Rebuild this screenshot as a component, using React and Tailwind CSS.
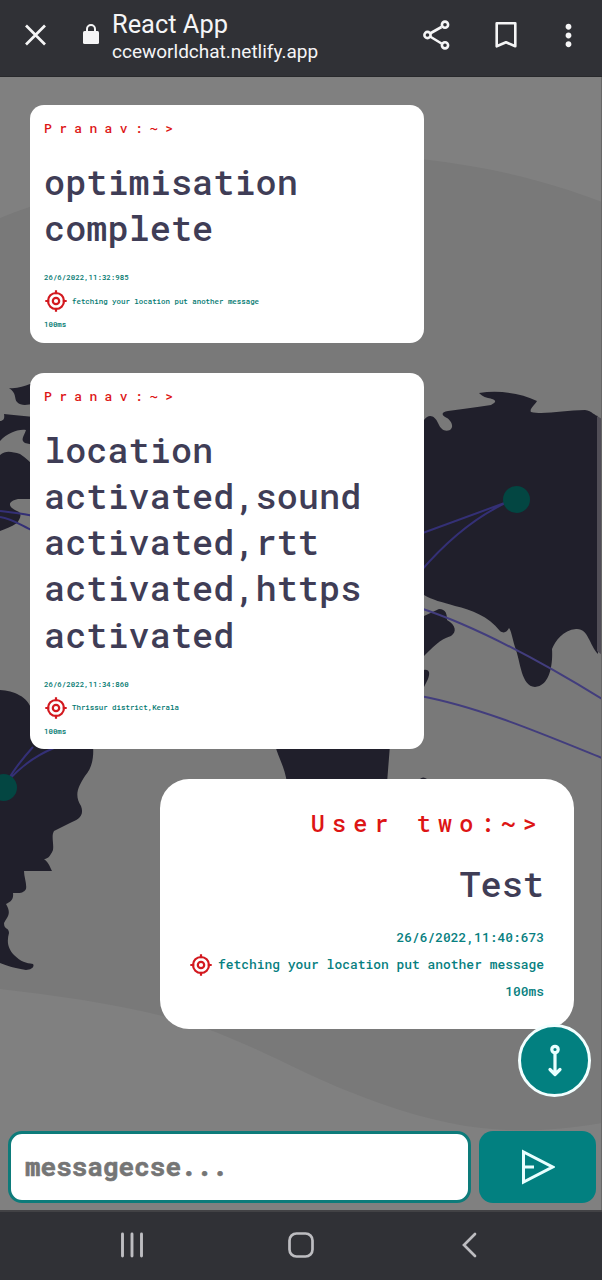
import { MdMoreVert } from 'react-icons/md';

function Target() {
  return (
    <svg viewBox="0 0 22 22" className="size-[22px] shrink-0" fill="none" stroke="#d3191f" strokeWidth="2.2">
      <circle cx="11" cy="11" r="8" />
      <circle cx="11" cy="11" r="3.2" />
      <path d="M11 .3v4M11 17.700v4M.3 11h4M17.700 11h4" />
    </svg>
  );
}

function Received({ name, lines, date, place }) {
  return (
    <article className="w-[394px] rounded-[14px] bg-white px-[14px] pt-[14px] pb-[12.4px]">
      <h2 className="text-[13px] leading-[19px] font-medium tracking-[7.35px] text-[#dd1515]">{name}</h2>
      <div className="pt-[21px] text-[35.25px] leading-[46.2px] font-medium text-[#3f3d56]">
        {lines.map((line) => (
          <p key={line} className="whitespace-nowrap">{line}</p>
        ))}
      </div>
      <div className="pt-[20.8px] text-[7.43px] leading-[11px] font-medium text-teal-700">
        <p>{date}</p>
        <div className="mt-[7px] mb-[7px] ml-px flex h-[22px] items-center gap-[5px]">
          <Target />
          <p>{place}</p>
        </div>
        <p>100ms</p>
      </div>
    </article>
  );
}

function Sent({ name, text, date, place }) {
  return (
    <article className="h-[250px] w-[414px] self-end rounded-[29px] bg-white px-[30px] pt-[28px] text-right">
      <h2 className="text-[23.5px] leading-[32px] font-medium tracking-[7.1px] text-[#dd1515]">{name}</h2>
      <p className="pt-[22px] text-[35.25px] leading-[46.2px] font-medium text-[#3f3d56]">{text}</p>
      <div className="pt-[16.4px] text-[12.95px] leading-[27.3px] font-medium text-[#078080]">
        <p>{date}</p>
        <div className="flex items-center justify-end gap-[6px]">
          <Target />
          <p className="whitespace-nowrap">{place}</p>
        </div>
        <p>100ms</p>
      </div>
    </article>
  );
}

function WorldMap() {
  return (
    <svg viewBox="0 77 602 1133" className="absolute inset-0 size-full" fill="none">
      <path fill="#797979" d="M0 218C100 178 230 154 330 154C430 155 520 170 602 202V1123C520 1137 460 1131 385 1105C300 1076 270 1050 190 1023C120 1004 60 996 0 989Z" />
      <g fill="#201f2b">
        <path d="M30 384C24 386 17 389 9 388C17 393 14 399 17 402C21 406 26 405 34 404V384Z" />
        <path d="M34 417C24 416 13 415 4 414C5 419 3 421 0 421V441C8 433 17 429 26 430C24 436 20 440 25 443L34 445V417Z" />
        <path d="M0 455C6 450 12 452 20 454C26 458 30 462 34 466V499L18 499C9 501 6 506 17 511C23 513 20 519 17 523C11 527 5 529 0 531Z" />
        <path d="M0 690C14 691 27 696 32 710L50 745H93C94 758 92 768 85 776C78 787 74 795 81 806C85 817 77 820 70 823L54 831C51 836 54 843 53 850C50 857 47 859 44 859C50 864 50 868 52 871L24 871C24 877 27 884 26 889C23 894 18 893 13 893C14 901 9 902 6 904C12 914 7 917 4 923C4 930 9 927 9 933C7 940 7 948 14 955C21 962 26 963 33 964C35 967 31 970 26 970C15 968 7 966 0 963Z" />
        <path d="M275 745H390L387 783H287C285 768 279 759 275 745Z" />
        <path d="M420 779Q423 776 427 779Z" />
        <path d="M424 420C429 413 435 416 438 423C441 430 445 432 450 430C455 426 450 420 447 418C441 415 441 412 448 411C463 409 478 407 491 405C499 401 494 399 488 398C483 397 480 394 479 393C499 390 521 393 537 401C535 405 529 409 531 412C544 415 565 410 585 410C592 411 595 416 598 416V654C589 644 588 628 576 629C563 630 555 641 552 649C553 664 550 686 535 687C521 686 521 663 515 647C512 637 511 630 509 628C507 632 504 634 500 631C488 616 472 610 455 606C442 602 432 600 424 595Z" />
        <path d="M424 616L439 609C446 609 447 614 447 620C456 625 457 632 451 636C440 639 432 648 424 656ZM424 670C430 669 430 674 428 679L424 687Z" />
      </g>
      <path fill="#514e57" d="M597 416L602 419V655L597 651Z" />
      <g stroke="#343076" strokeWidth="2">
        <path d="M0 511C15 513 25 514 34 516M0 517C14 519 23 527 34 531" />
        <path d="M7 782C15 767 24 757 33 747M7 782C20 767 37 755 54 748" />
        <path d="M420 534L510 501C476 516 444 544 420 572" />
      </g>
      <g stroke="#423d7d" strokeWidth="2">
        <path d="M420 608C484 629 550 667 602 699M420 696C480 707 545 735 602 758" />
      </g>
      <g fill="#034642">
        <circle cx="516.5" cy="499.5" r="13.5" />
        <circle cx="3.5" cy="787.5" r="13.5" />
      </g>
      <path d="M601.5 77V1211" stroke="#666" />
    </svg>
  );
}

export default function App() {
  return (
    <div className="flex h-[1280px] w-[602px] flex-col overflow-hidden bg-[#808080] font-['Roboto_Mono','DejaVu_Sans_Mono',monospace]">
      <header className="flex h-[77px] shrink-0 items-center border-b border-[#28292c] bg-[#303136] pr-[16px] pl-[20px] font-['Roboto',sans-serif] text-[#f5f5f6]">
        <svg viewBox="0 0 30 30" className="mt-[-7px] size-[30px]" fill="none" stroke="currentColor" strokeWidth="2.7">
          <path d="M6 5.500l19 19M25 5.500l-19 19" />
        </svg>
        <svg viewBox="0 0 18 22" className="mt-[-8px] ml-[32px] h-[22px] w-[18px]" fill="none">
          <rect x="1" y="8" width="16" height="13" rx="1.500" fill="currentColor" />
          <path d="M5 9V6a4 4 0 0 1 8 0v3" stroke="currentColor" strokeWidth="2" />
        </svg>
        <div className="mt-[-3px] ml-[12px] flex-1 whitespace-nowrap">
          <h1 className="text-[25.4px] leading-[29px]">React App</h1>
          <p className="text-[19px] leading-[25px]">cceworldchat.netlify.app</p>
        </div>
        <div className="mt-[-6px] flex items-center">
          <svg viewBox="0 0 30 32" className="h-[32px] w-[30px]" fill="none" stroke="currentColor" strokeWidth="2.6">
            <path d="M8 14.500L19.500 8M8 17.500L19.500 24.500" />
            <circle cx="5.500" cy="16" r="3.100" />
            <circle cx="23" cy="5.700" r="3.100" />
            <circle cx="23" cy="26.300" r="3.100" />
          </svg>
          <svg viewBox="0 0 24 28" className="ml-[42px] h-[28px] w-[24px]" fill="none" stroke="currentColor" strokeWidth="2.6">
            <path d="M2.700 2.300h18.600v23l-9.300-4-9.300 4z" strokeLinejoin="round" />
          </svg>
          <MdMoreVert className="ml-[33px] size-[35px]" />
        </div>
      </header>

      <main className="relative flex min-h-0 flex-1 flex-col">
        <WorldMap />
        <section className="relative flex flex-1 flex-col gap-[30.1px] pt-[28px] pr-[28px] pl-[30px]">
          <Received
            name="Pranav:~>"
            lines={['optimisation', 'complete']}
            date="26/6/2022,11:32:985"
            place="fetching your location put another message"
          />
          <Received
            name="Pranav:~>"
            lines={['location', 'activated,sound', 'activated,rtt', 'activated,https', 'activated']}
            date="26/6/2022,11:34:860"
            place="Thrissur district,Kerala"
          />
          <Sent
            name="User two:~>"
            text="Test"
            date="26/6/2022,11:40:673"
            place="fetching your location put another message"
          />
        </section>
        <button className="absolute right-[11px] bottom-[113px] flex size-[73px] items-center justify-center rounded-full border-[3px] border-[#f2ffff] bg-[#028080]">
          <svg viewBox="0 0 20 36" className="h-[36px] w-[20px]" fill="none" stroke="#e9ffff" strokeWidth="3.2" strokeLinecap="round" strokeLinejoin="round">
            <circle cx="10" cy="6.500" r="3.200" />
            <path d="M10 10v21M5 26.500l5 5 5-5" />
          </svg>
        </button>
        <form className="relative flex gap-[8px] pr-[6px] pb-[7px] pl-[8px]">
          <input
            placeholder="messagecse..."
            className="h-[72px] min-w-0 flex-1 rounded-[14px] border-[3px] border-[#0d7b7a] bg-white px-[14px] pb-[2px] text-[26px] font-bold text-[#757575] [-webkit-text-stroke:0.6px_#757575] placeholder:text-[#757575]"
          />
          <button type="button" className="flex h-[72px] w-[117px] items-center justify-center rounded-[14px] bg-[#028080]">
            <svg viewBox="0 0 34 36" className="h-[36px] w-[34px]" fill="none" stroke="#e9ffff" strokeWidth="3">
              <path d="M2.500 3v30L31.500 18zM2.500 18h10.500" />
            </svg>
          </button>
        </form>
      </main>

      <nav className="flex h-[70px] shrink-0 items-center border-t-2 border-[#424245] bg-[#303136] pb-[2px] text-[#bdbdc1]">
        <svg viewBox="0 0 26 26" className="ml-[119px] size-[26px]" fill="none" stroke="currentColor" strokeWidth="2.9" strokeLinecap="round">
          <path d="M3.500 2v22M13 2v22M22.500 2v22" />
        </svg>
        <svg viewBox="0 0 28 28" className="ml-[142px] size-[28px]" fill="none" stroke="currentColor" strokeWidth="2.7">
          <rect x="2.500" y="2.500" width="23" height="23" rx="7" />
        </svg>
        <svg viewBox="0 0 18 26" className="ml-[145px] h-[26px] w-[18px]" fill="none" stroke="currentColor" strokeWidth="2.7" strokeLinecap="round">
          <path d="M15 2L4 13l11 11" />
        </svg>
      </nav>
    </div>
  );
}
